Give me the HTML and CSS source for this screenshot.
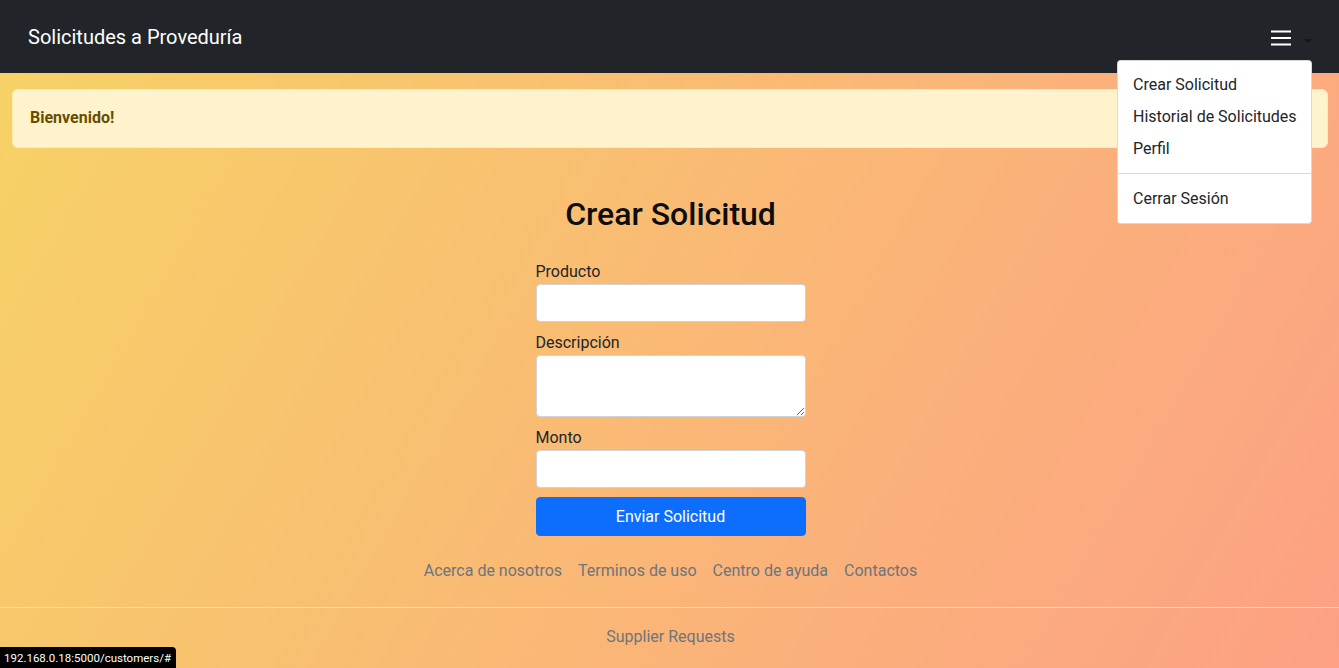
FILE: index.html
```html
<!DOCTYPE html>
<html lang="es">
<head>
<meta charset="utf-8">
<title>Solicitudes a Proveduría</title>
<link rel="stylesheet" href="styles.css">
</head>
<body>
<nav class="navbar">
  <a class="brand" href="#">Solicitudes a Proveduría</a>
  <div class="menu-toggle">
    <svg class="burger" width="20" height="16" viewBox="0 0 20 16" aria-hidden="true">
      <path d="M0 1.5h20M0 8h20M0 14.5h20" stroke="#ffffff" stroke-width="2" fill="none"/>
    </svg>
    <span class="caret"></span>
  </div>
  <ul class="dropdown">
    <li><a class="dd-item" href="#">Crear Solicitud</a></li>
    <li><a class="dd-item" href="#">Historial de Solicitudes</a></li>
    <li><a class="dd-item" href="#">Perfil</a></li>
    <li class="dd-divider"></li>
    <li><a class="dd-item" href="#">Cerrar Sesión</a></li>
  </ul>
</nav>

<div class="alert"><strong>Bienvenido!</strong></div>

<main class="content">
  <h2 class="title">Crear Solicitud</h2>
  <form class="form">
    <label class="label" for="producto">Producto</label>
    <input class="control" id="producto" type="text">
    <label class="label spaced" for="descripcion">Descripción</label>
    <textarea class="control area" id="descripcion" rows="2"></textarea>
    <label class="label spaced" for="monto">Monto</label>
    <input class="control" id="monto" type="text">
    <button class="submit" type="button">Enviar Solicitud</button>
  </form>
</main>

<footer class="footer">
  <ul class="links">
    <li><a href="#">Acerca de nosotros</a></li>
    <li><a href="#">Terminos de uso</a></li>
    <li><a href="#">Centro de ayuda</a></li>
    <li><a href="#">Contactos</a></li>
  </ul>
  <p class="copy">Supplier Requests</p>
</footer>

<div class="statusbar">192.168.0.18:5000/customers/#</div>
</body>
</html>
```
FILE: styles.css
```css
* { box-sizing: border-box; }

html, body { height: 100%; }

body {
  margin: 0;
  font-family: "Segoe UI", Roboto, "Noto Sans", sans-serif;
  font-size: 16px;
  line-height: 1.5;
  color: #212529;
  background: linear-gradient(120deg, #f6d365 0%, #fda085 100%);
  background-attachment: fixed;
  min-height: 668px;
  overflow: hidden;
}

a { text-decoration: none; }

.navbar {
  position: relative;
  height: 73px;
  background: #212529;
  display: flex;
  align-items: center;
  justify-content: space-between;
  padding: 0 27px 0 28px;
}

.brand {
  color: #ffffff;
  font-size: 20px;
  line-height: 30px;
}

.menu-toggle {
  display: flex;
  align-items: center;
  gap: 13px;
  height: 73px;
}

.burger { display: block; margin-top: 2px; }

.caret {
  width: 0;
  height: 0;
  border-top: 4px solid #141619;
  border-left: 4px solid transparent;
  border-right: 4px solid transparent;
  margin-top: 9px;
}

.dropdown {
  position: absolute;
  top: 60px;
  right: 27px;
  width: 195px;
  margin: 0;
  padding: 8px 0;
  list-style: none;
  background: #ffffff;
  border: 1px solid rgba(0, 0, 0, 0.15);
  border-radius: 4px;
  z-index: 10;
}

.dd-item {
  display: block;
  padding: 4px 15px;
  color: #212529;
  white-space: nowrap;
}

.dd-divider {
  height: 0;
  margin: 8px 0 9px;
  border-top: 1px solid rgba(0, 0, 0, 0.15);
}

.alert {
  margin: 16px 11px 0 12px;
  padding: 16px 17px 17px;
  background: #fff3cd;
  border: 1px solid #ffecb5;
  border-radius: 6px;
  color: #664d03;
}

.alert strong { font-weight: 700; }

.content {
  display: flex;
  flex-direction: column;
  align-items: center;
  padding: 47px 0 0 2px;
}

.title {
  margin: 0 0 27px;
  font-size: 32px;
  font-weight: 500;
  line-height: 1.2;
  color: #0d0d0d;
}

.form {
  width: 270px;
  display: flex;
  flex-direction: column;
}

.label {
  display: block;
  line-height: 24px;
}

.label.spaced { margin-top: 9px; }

.control {
  display: block;
  width: 100%;
  height: 38px;
  padding: 6px 12px;
  font: inherit;
  color: #212529;
  background: #ffffff;
  border: 1px solid #ced4da;
  border-radius: 4px;
}

.control.area {
  height: 62px;
  resize: vertical;
}

.submit {
  margin-top: 9px;
  height: 39px;
  border: 1px solid #0d6efd;
  border-radius: 4px;
  background: #0d6efd;
  color: #ffffff;
  font: inherit;
  cursor: pointer;
}

.footer {
  padding-top: 15px;
}

.links {
  display: flex;
  justify-content: center;
  margin: 0;
  padding: 8px 0 24px 2px;
  list-style: none;
  border-bottom: 1px solid #dee2e6;
}

.links a {
  display: block;
  padding: 0 8px;
  line-height: 24px;
  color: #6c757d;
}

.copy {
  margin: 17px 0 0;
  padding-left: 2px;
  text-align: center;
  color: #6c757d;
}

.statusbar {
  position: fixed;
  left: 0;
  bottom: 0;
  height: 21px;
  padding: 2px 5px 0 4px;
  background: #000000;
  color: #ffffff;
  font-size: 11.5px;
  line-height: 18px;
  border-top-right-radius: 4px;
}
```
